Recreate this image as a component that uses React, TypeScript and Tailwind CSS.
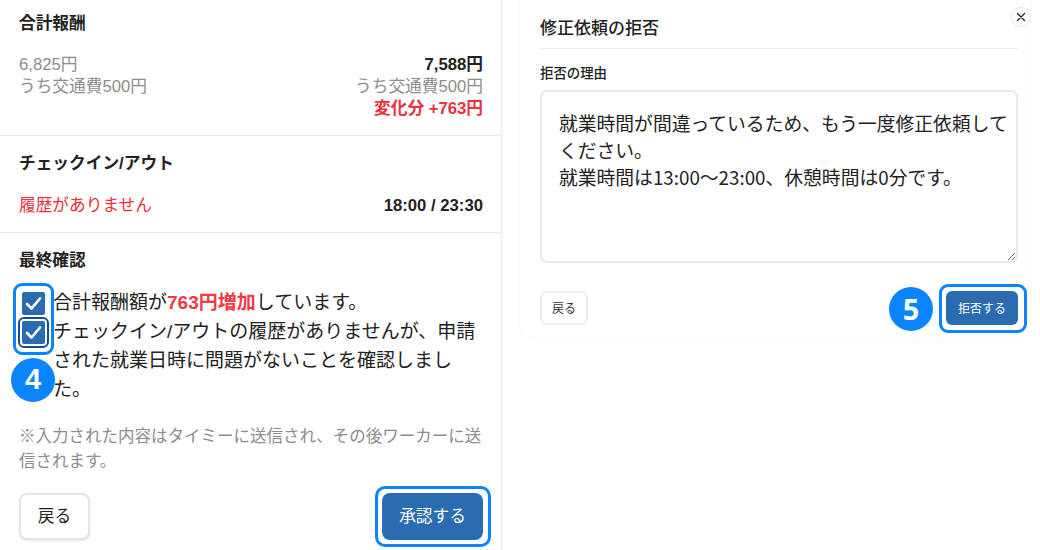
const leftFont = "font-['Liberation_Sans','Noto_Sans_CJK_JP',sans-serif]";

function CheckBox({ focused }: { focused?: boolean }) {
  return (
    <div className={`relative w-[23px] h-[23px] rounded-[2px] bg-[#2b6cb0] flex items-center justify-center ${focused ? "outline-2 outline-offset-[2px] outline-[#1d4a8c]" : ""}`}>
      <svg width="17" height="15" viewBox="0 0 17 15" fill="none">
        <path d="M2 8L6.5 12.5L15 2.5" stroke="white" strokeWidth="2.6" strokeLinecap="round" strokeLinejoin="round" />
      </svg>
    </div>
  );
}

function Badge({ n, className }: { n: number; className: string }) {
  return (
    <div className={`absolute w-[44px] h-[44px] rounded-full bg-[#0a84ff] text-white flex items-center justify-center text-[29px] font-bold ${className}`}>
      {n}
    </div>
  );
}

export default function App() {
  return (
    <div className="relative flex w-[1040px] h-[550px] bg-white overflow-hidden text-[#222]">
      <div className={`w-[502px] h-full shrink-0 border-r border-[#eeeeee] ${leftFont}`}>
        <section className="h-[136px] border-b border-[#e8e8e8] pl-[19px] pr-[18px] pt-[12px]">
          <h2 className="text-[16.7px] leading-[24px] font-bold">合計報酬</h2>
          <div className="flex justify-between mt-[18px] text-[16.7px] leading-[22px]">
            <div className="text-[#8c8c8c]">
              <p>6,825円</p>
              <p>うち交通費500円</p>
            </div>
            <div className="text-right">
              <p className="font-bold">7,588円</p>
              <p className="text-[#8c8c8c]">うち交通費500円</p>
              <p className="font-bold text-[#ee2f3d]">変化分 +763円</p>
            </div>
          </div>
        </section>
        <section className="h-[97px] border-b border-[#e8e8e8] pl-[19px] pr-[18px] pt-[16px]">
          <h2 className="text-[16.7px] leading-[24px] font-bold">チェックイン/アウト</h2>
          <div className="flex justify-between items-center mt-[18px] text-[16.7px] leading-[24px]">
            <p className="text-[#ee2f3d]">履歴がありません</p>
            <p className="font-bold">18:00 / 23:30</p>
          </div>
        </section>
        <section className="pl-[19px] pr-[18px] pt-[16px]">
          <h2 className="text-[16.7px] leading-[24px] font-bold">最終確認</h2>
          <div className="flex mt-[18px]">
            <div className="w-[34px] shrink-0 pl-[3px] pt-[1px] flex flex-col gap-[6px]">
              <CheckBox />
              <CheckBox focused />
            </div>
            <p className="text-[19px] leading-[29px] -mt-[3px] w-[429px] shrink-0">
              合計報酬額が<span className="font-bold text-[#ee3b45]">763円増加</span>しています。
              <br />
              チェックイン/アウトの履歴がありませんが、申請された就業日時に問題がないことを確認しました。
            </p>
          </div>
          <p className="mt-[20px] text-[16.5px] leading-[25px] text-[#8c8c8c]">
            ※入力された内容はタイミーに送信され、その後ワーカーに送信されます。
          </p>
          <div className="flex justify-between mt-[19px]">
            <button className="w-[71px] h-[47px] rounded-[8px] border-2 border-[#e4e4e4] bg-white text-[16.7px] shadow-[0_1px_2px_rgba(0,0,0,0.1)]">戻る</button>
            <button className="w-[101px] h-[47px] rounded-[8px] bg-[#2b6cb0] text-white text-[16.7px]">承認する</button>
          </div>
        </section>
      </div>

      <div className="flex-1 pl-[17px] font-['Noto_Sans_CJK_JP',sans-serif]">
        <div className="w-[512px] h-[338px] rounded-b-[12px] border-l border-b border-r border-[#f8f8f8] pl-[20px] pr-[12px] pt-[14px]">
          <h2 className="text-[17px] leading-[26px] font-medium pb-[8px] border-b border-[#ececec]">修正依頼の拒否</h2>
          <label className="block mt-[13px] text-[13.4px] leading-[20px] font-medium">拒否の理由</label>
          <textarea
            className="block w-[478px] h-[173px] mt-[8px] pl-[17px] pr-[4px] pt-[17px] rounded-[7px] border-2 border-[#e8e8e8] text-[18.8px] leading-[27px] text-[#222] outline-none"
            defaultValue={"就業時間が間違っているため、もう一度修正依頼してください。\n就業時間は13:00～23:00、休憩時間は0分です。"}
          />
          <div className="flex justify-between mt-[28px]">
            <button className="w-[48px] h-[34px] rounded-[6px] border-2 border-[#ececec] bg-white text-[12px] text-[#333]">戻る</button>
            <button className="w-[72px] h-[34px] rounded-[6px] bg-[#2b6cb0] text-white text-[12px]">拒否する</button>
          </div>
        </div>
      </div>

      {/* close button sits over the card corner */}
      <button className="absolute left-[1011px] top-[7px] w-[20px] h-[20px] rounded-full border border-[#e4e4e4] bg-white flex items-center justify-center">
        <svg width="10" height="10" viewBox="0 0 10 10" fill="none">
          <path d="M1.5 1.5L8.5 8.5M8.5 1.5L1.5 8.5" stroke="#222" strokeWidth="1.3" strokeLinecap="round" />
        </svg>
      </button>

      {/* tutorial highlights */}
      <div className="absolute left-[13px] top-[283px] w-[41px] h-[72px] rounded-[9px] border-[3px] border-[#0a84ff]" />
      <Badge n={4} className="left-[11px] top-[358px] font-['Liberation_Sans',sans-serif]" />
      <div className="absolute left-[375px] top-[486px] w-[116px] h-[61px] rounded-[10px] border-[3px] border-[#0a84ff]" />
      <Badge n={5} className="left-[889px] top-[287px] font-['Noto_Sans',sans-serif]" />
      <div className="absolute left-[939px] top-[284px] w-[88px] h-[49px] rounded-[9px] border-[3px] border-[#0a84ff]" />
    </div>
  );
}
